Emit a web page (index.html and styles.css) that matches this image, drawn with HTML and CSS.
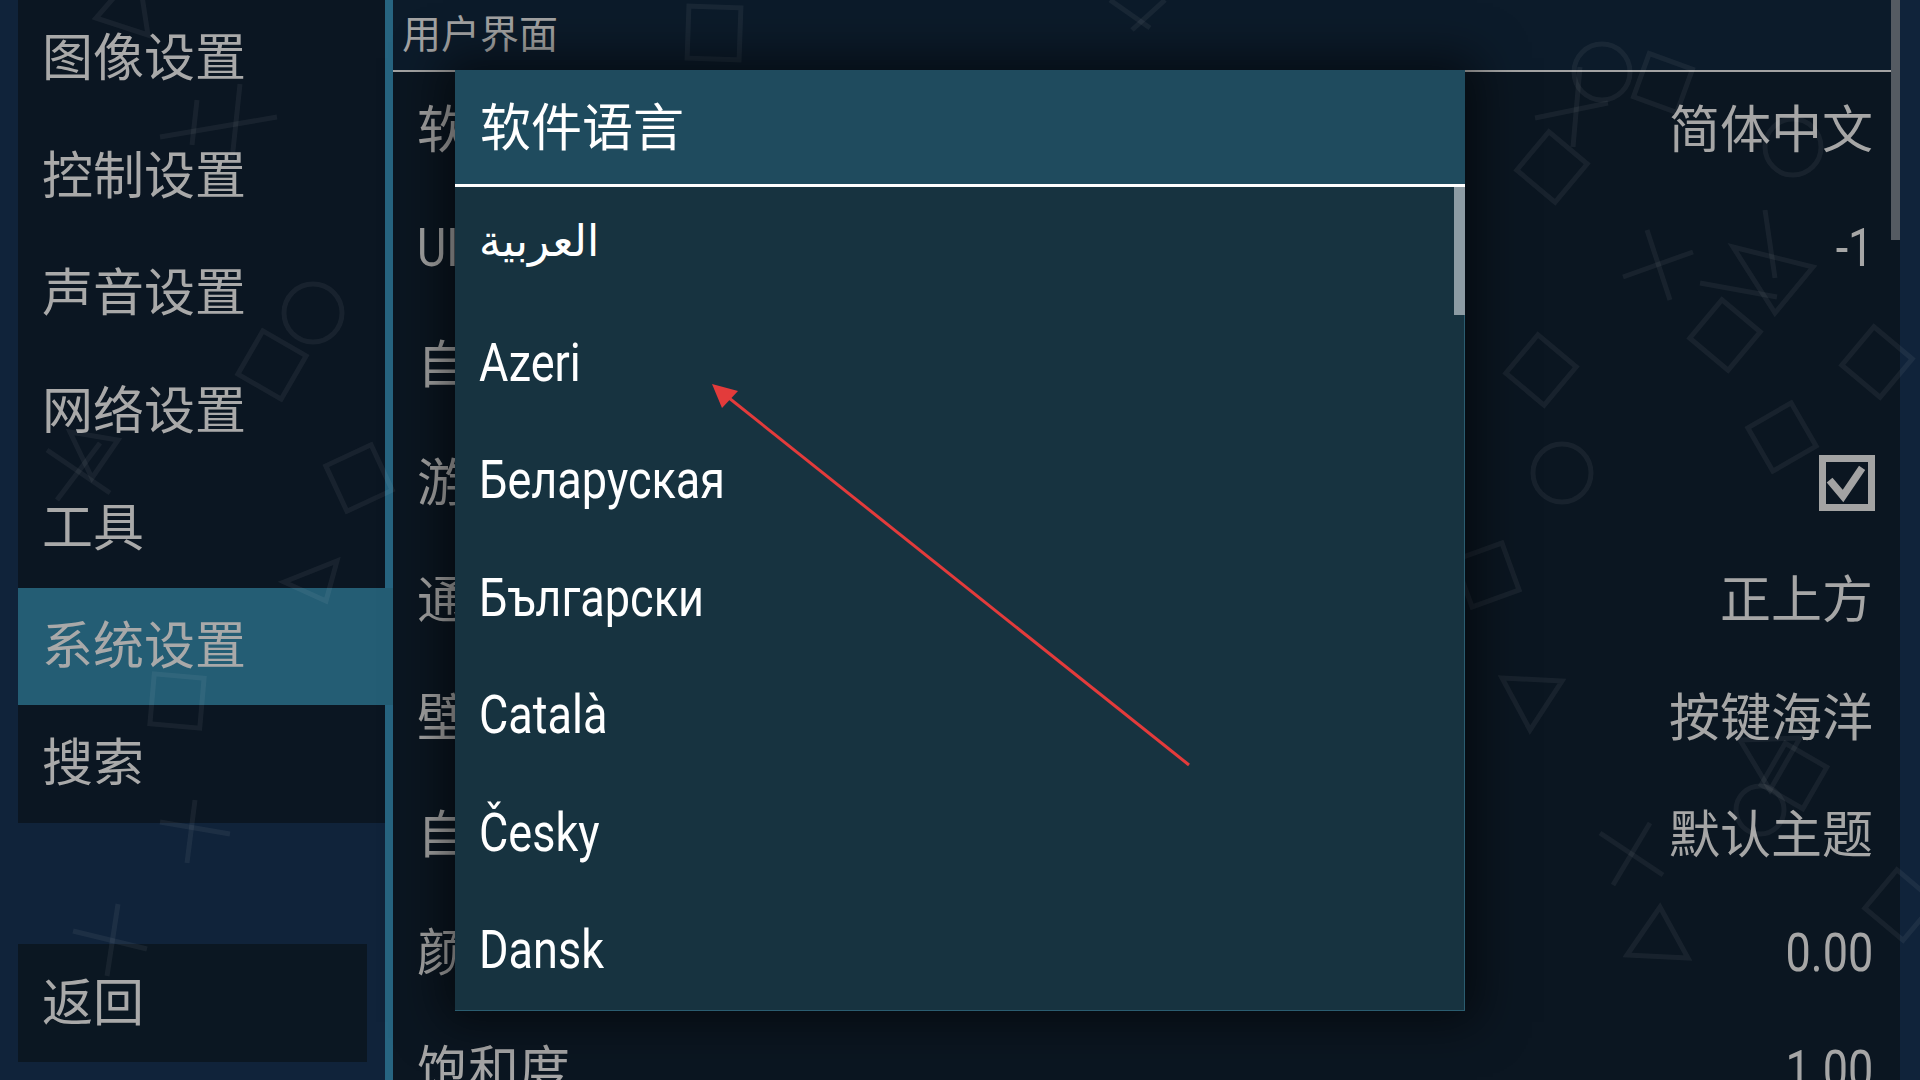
FILE: index.html
```html
<!DOCTYPE html>
<html lang="zh-CN">
<head>
<meta charset="utf-8">
<title>系统设置</title>
<link rel="stylesheet" href="styles.css">
</head>
<body>
<div class="app">
  <aside class="sidebar">
    <nav class="nav">
      <div class="nav-item">图像设置</div>
      <div class="nav-item">控制设置</div>
      <div class="nav-item">声音设置</div>
      <div class="nav-item">网络设置</div>
      <div class="nav-item">工具</div>
      <div class="nav-item selected">系统设置</div>
      <div class="nav-item">搜索</div>
      <div class="nav-spacer"></div>
      <div class="back-btn">返回</div>
    </nav>
  </aside>

  <main class="panel">
    <header class="panel-head">用户界面</header>
    <div class="rows">
      <div class="row"><span class="label">软件语言</span><span class="value">简体中文</span></div>
      <div class="row"><span class="label"><span class="lat">UI</span> 尺寸</span><span class="value"><span class="lat r">-1</span></span></div>
      <div class="row"><span class="label">自动隐藏触屏按钮</span><span class="value"></span></div>
      <div class="row"><span class="label">游戏列表网格视图</span>
        <span class="value">
          <svg class="checkbox" width="56" height="56" viewBox="0 0 56 56">
            <rect x="3.5" y="3.5" width="49" height="49" fill="none" stroke="#a3a3a3" stroke-width="7"/>
            <path d="M13 28 L24 41 L41 16" fill="none" stroke="#a3a3a3" stroke-width="7.5" stroke-linejoin="miter" stroke-linecap="square"/>
          </svg>
        </span>
      </div>
      <div class="row"><span class="label">通知位置</span><span class="value">正上方</span></div>
      <div class="row"><span class="label">壁纸</span><span class="value">按键海洋</span></div>
      <div class="row"><span class="label">自定义主题</span><span class="value">默认主题</span></div>
      <div class="row"><span class="label">颜色</span><span class="value"><span class="lat r">0.00</span></span></div>
      <div class="row"><span class="label">饱和度</span><span class="value"><span class="lat r">1.00</span></span></div>
    </div>
    <div class="panel-scroll"></div>
  </main>
  <div class="outer-right"></div>
</div>

<svg class="bg-shapes" width="1920" height="1080" viewBox="0 0 1920 1080">
  <g fill="none" stroke="rgba(255,255,255,0.055)" stroke-width="5">
    <polygon points="96,18 148,35 138,-30"/>
    <line x1="160" y1="137" x2="277" y2="117"/>
    <line x1="240" y1="84" x2="232" y2="160"/>
    <line x1="197" y1="100" x2="192" y2="145"/>
    <circle cx="313" cy="313" r="29"/>
    <rect x="247" y="340" width="50" height="50" transform="rotate(30 272 365)"/>
    <line x1="47" y1="450" x2="110" y2="493"/>
    <line x1="57" y1="500" x2="100" y2="443"/>
    <polygon points="70,432 118,440 92,478"/>
    <rect x="334" y="453" width="50" height="50" transform="rotate(-25 359 478)"/>
    <polygon points="284,582 337,561 326,601"/>
    <rect x="152" y="676" width="50" height="50" transform="rotate(5 177 701)"/>
    <line x1="160" y1="822" x2="230" y2="834"/>
    <line x1="195" y1="800" x2="187" y2="863"/>
    <line x1="73" y1="931" x2="147" y2="949"/>
    <line x1="118" y1="904" x2="107" y2="976"/>
    <rect x="688" y="7" width="52" height="52" transform="rotate(2 714 33)"/>
    <line x1="1110" y1="0" x2="1150" y2="28"/>
    <line x1="1165" y1="0" x2="1132" y2="30"/>
    <circle cx="1602" cy="72" r="28"/>
    <rect x="1640" y="60" width="46" height="46" transform="rotate(20 1663 83)"/>
    <line x1="1535" y1="118" x2="1608" y2="103"/>
    <line x1="1580" y1="67" x2="1573" y2="147"/>
    <rect x="1527" y="142" width="50" height="50" transform="rotate(40 1552 167)"/>
    <circle cx="1793" cy="147" r="28"/>
    <line x1="1623" y1="277" x2="1693" y2="252"/>
    <line x1="1647" y1="230" x2="1670" y2="300"/>
    <line x1="1700" y1="283" x2="1777" y2="297"/>
    <line x1="1765" y1="210" x2="1775" y2="278"/>
    <polygon points="1733,247 1813,267 1775,313"/>
    <rect x="1700" y="310" width="50" height="50" transform="rotate(40 1725 335)"/>
    <rect x="1852" y="337" width="50" height="50" transform="rotate(40 1877 362)"/>
    <rect x="1516" y="345" width="50" height="50" transform="rotate(40 1541 370)"/>
    <circle cx="1562" cy="473" r="29"/>
    <rect x="1757" y="412" width="50" height="50" transform="rotate(-30 1782 437)"/>
    <rect x="1462" y="550" width="50" height="50" transform="rotate(-20 1487 575)"/>
    <polygon points="1502,678 1562,681 1530,730"/>
    <polygon points="1740,740 1800,738 1770,790"/>
    <rect x="1770" y="752" width="48" height="48" transform="rotate(30 1794 776)"/>
    <line x1="1600" y1="833" x2="1663" y2="875"/>
    <line x1="1650" y1="823" x2="1613" y2="885"/>
    <polygon points="1627,955 1688,958 1660,907"/>
    <rect x="1875" y="880" width="50" height="50" transform="rotate(40 1900 905)"/>
    <circle cx="1760" cy="810" r="24"/>
  </g>
</svg>

<section class="dialog">
  <div class="dialog-head">软件语言</div>
  <div class="dialog-list">
    <div class="lang"><span class="ar">العربية</span></div>
    <div class="lang"><span class="lat">Azeri</span></div>
    <div class="lang"><span class="lat">Беларуская</span></div>
    <div class="lang"><span class="lat">Български</span></div>
    <div class="lang"><span class="lat">Català</span></div>
    <div class="lang"><span class="lat">Česky</span></div>
    <div class="lang"><span class="lat">Dansk</span></div>
    <div class="dialog-scroll"></div>
  </div>
</section>

<svg class="annot" width="1920" height="1080" viewBox="0 0 1920 1080">
  <line x1="1189" y1="765" x2="724" y2="394" stroke="#e33b3b" stroke-width="3"/>
  <polygon points="712,384 738,391 722,408" fill="#e33b3b"/>
</svg>
</body>
</html>
```

FILE: styles.css
```css
html, body {
  margin: 0;
  padding: 0;
}
body {
  width: 1920px;
  height: 1080px;
  overflow: hidden;
  background: #10233a;
  font-family: Roboto, "Noto Sans CJK SC", sans-serif;
  position: relative;
}
.app {
  display: flex;
  height: 1080px;
}

/* sidebar */
.sidebar {
  padding-left: 18px;
  flex: none;
}
.nav {
  width: 367px;
  height: 1080px;
  border-right: 8px solid #276480;
  display: flex;
  flex-direction: column;
}
.nav-item {
  height: 117.5px;
  flex: none;
  display: flex;
  align-items: center;
  padding-left: 24px;
  font-size: 51px;
  line-height: 1;
  color: #a9a9a9;
  background: #0b1622;
}
.nav-item.selected {
  background: #245d74;
  margin-right: -8px;
}
.nav-spacer {
  height: 121.5px;
  flex: none;
}
.back-btn {
  width: 349px;
  height: 118px;
  box-sizing: border-box;
  flex: none;
  display: flex;
  align-items: center;
  padding-left: 24px;
  font-size: 51px;
  line-height: 1;
  color: #a9a9a9;
  background: #0b1722;
}

/* right panel */
.panel {
  width: 1507px;
  flex: none;
  position: relative;
  background: #0b1621;
  display: flex;
  flex-direction: column;
}
.panel-head {
  height: 70px;
  flex: none;
  background: #0c1b2a;
  border-bottom: 2px solid #a3a3a3;
  display: flex;
  align-items: center;
  padding-left: 9px;
  font-size: 39px;
  line-height: 1;
  color: #a3a3a3;
}
.rows {
  display: flex;
  flex-direction: column;
}
.row {
  height: 117.5px;
  flex: none;
  display: flex;
  align-items: center;
  justify-content: space-between;
  padding: 0 27px 0 24px;
  font-size: 51px;
  line-height: 1;
  color: #a6a6a6;
}
.label {
  white-space: nowrap;
}
.value {
  display: flex;
  align-items: center;
}
.checkbox {
  display: block;
  margin-right: -2px;
}
.panel-scroll {
  position: absolute;
  right: 0;
  top: 0;
  width: 9px;
  height: 240px;
  background: #555b62;
}
.outer-right {
  flex: 1;
}

.lat {
  display: inline-block;
  font-size: 53px;
  transform: scaleX(0.85);
  transform-origin: left center;
}
.lat.r {
  transform-origin: right center;
}

/* decorative background symbols */
.bg-shapes {
  position: absolute;
  left: 0;
  top: 0;
  pointer-events: none;
}

/* dialog */
.dialog {
  position: absolute;
  left: 455px;
  top: 70px;
  width: 1010px;
  height: 940px;
  box-shadow: 0 0 45px 12px rgba(0, 0, 0, 0.55);
  display: flex;
  flex-direction: column;
}
.dialog-head {
  height: 117px;
  flex: none;
  box-sizing: border-box;
  background: #1f4b5e;
  border-bottom: 3px solid #ffffff;
  display: flex;
  align-items: center;
  padding-left: 25px;
  padding-top: 3px;
  font-size: 51px;
  line-height: 1;
  color: #ffffff;
}
.dialog-list {
  flex: 1;
  position: relative;
  background: #173340;
  border-right: 1px solid #2b5d70;
  border-bottom: 1px solid #2b5d70;
  display: flex;
  flex-direction: column;
}
.lang {
  height: 117.5px;
  flex: none;
  display: flex;
  align-items: center;
  padding-left: 24px;
  font-size: 53px;
  line-height: 1;
  color: #ffffff;
}
.ar {
  font-family: "DejaVu Sans", sans-serif;
  font-size: 44px;
  margin-top: -10px;
}
.dialog-scroll {
  position: absolute;
  right: -1px;
  top: 0;
  width: 11px;
  height: 128px;
  background: #8c9ba3;
}

.annot {
  position: absolute;
  left: 0;
  top: 0;
  pointer-events: none;
}
```
